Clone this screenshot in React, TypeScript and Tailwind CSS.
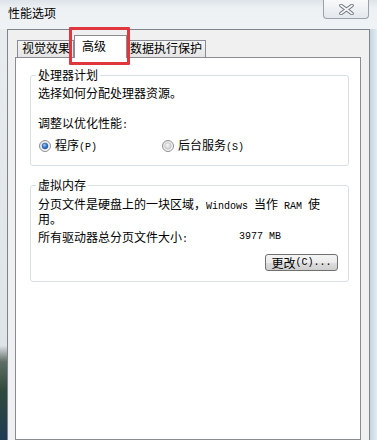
import React from "react";

const cjk = "font-['Noto_Sans_CJK_SC',sans-serif]";
const mono = "font-['Liberation_Mono',monospace] text-[10px]";

function Radio({ checked, id }: { checked: boolean; id: string }) {
  return (
    <svg width="12" height="12" viewBox="0 0 12 12" className="shrink-0">
      <defs>
        <linearGradient id={`o${id}`} x1="0" y1="0" x2="1" y2="1">
          <stop offset="0" stopColor="#e2e2e2" />
          <stop offset="1" stopColor="#fbfbfb" />
        </linearGradient>
        <radialGradient id={`b${id}`} cx="0.4" cy="0.35" r="0.7">
          <stop offset="0" stopColor="#a8d0f5" />
          <stop offset="0.5" stopColor="#3b7bd0" />
          <stop offset="1" stopColor="#1c4d95" />
        </radialGradient>
        <radialGradient id={`g${id}`} cx="0.4" cy="0.35" r="0.7">
          <stop offset="0" stopColor="#f6f6f6" />
          <stop offset="1" stopColor="#c9c9c9" />
        </radialGradient>
      </defs>
      <circle cx="6" cy="6" r="5.5" fill={`url(#o${id})`} stroke="#8d8f92" strokeWidth="1" />
      {checked ? (
        <circle cx="6" cy="6" r="3" fill={`url(#b${id})`} stroke="#2a5a9c" strokeWidth="0.5" />
      ) : (
        <circle cx="6" cy="6" r="3.3" fill={`url(#g${id})`} stroke="#b9b9b9" strokeWidth="0.5" />
      )}
    </svg>
  );
}

export default function App() {
  return (
    <div
      className={`relative w-[377px] h-[440px] overflow-hidden flex flex-col bg-[#e9eef2] text-black text-[12px] ${cjk}`}
    >
      {/* title bar */}
      <div className="h-[29px] flex items-start justify-between bg-[linear-gradient(180deg,#dde3e9_0px,#edf1f4_8px,#f0f3f6_29px)]">
        <div className="pl-[8px] pt-[6px] leading-[14px]">性能选项</div>
        <div className="mr-[8px] w-[46px] h-[19px] rounded-b-[4px] border border-t-0 border-[#9aa1ab] bg-[linear-gradient(180deg,#f8f9fa,#e3e8ed)] flex items-center justify-center">
          <svg width="15" height="11" viewBox="0 0 15 11">
            <path d="M2 1.5 L13 9.5 M13 1.5 L2 9.5" stroke="#6f747c" strokeWidth="3.6" strokeLinecap="round" />
            <path d="M2 1.5 L13 9.5 M13 1.5 L2 9.5" stroke="#f4f5f6" strokeWidth="1.8" strokeLinecap="round" />
          </svg>
        </div>
      </div>

      {/* body */}
      <div className="flex-1 flex">
        <div className="w-[7px] bg-[linear-gradient(180deg,#e8ecef_0%,#dfe4e8_77%,#5f6e64_81%,#2f4a3c_88%,#1f3b55_100%)]" />
        <div className="w-[363px] border-l border-t border-r border-[#7d848c] bg-[#f0f0f0] flex flex-col">
          {/* tabs */}
          <div className="h-[27px] flex items-end pl-[9px]">
            <div className="w-[57px] h-[17px] border border-b-0 border-[#898c95] bg-[linear-gradient(180deg,#f5f5f5,#e5e5e5)] pl-[4px] leading-[13px]">
              视觉效果
            </div>
            <div className="relative z-10 -mb-[1px] w-[53px] h-[23px] border border-b-0 border-[#898c95] bg-white pl-[7px] pt-[3px] leading-[13px]">
              高级
            </div>
            <div className="w-[79px] h-[17px] border border-l-0 border-b-0 border-[#898c95] bg-[linear-gradient(180deg,#f5f5f5,#e5e5e5)] pl-[3px] leading-[13px]">
              数据执行保护
            </div>
          </div>

          {/* panel */}
          <div className="ml-[7px] w-[346px] flex-1 border border-[#898c95] bg-white flex flex-col">
            <fieldset className="mt-[10px] ml-[14px] mr-[11px] border border-[#d5dfe5] rounded-[3px] pl-[7px] pr-[8px] pb-[12px]">
              <legend className="-ml-[2px] px-[2px] leading-[14px]">处理器计划</legend>
              <div className="mt-[4px] leading-[14px]">选择如何分配处理器资源。</div>
              <div className="mt-[16px] leading-[14px]">
                调整以优化性能<span className={mono}>:</span>
              </div>
              <div className="mt-[6px] h-[14px] flex items-center leading-[14px]">
                <div className="ml-[1px] w-[123px] flex items-center gap-[4px]">
                  <Radio checked id="a" />
                  <span>
                    程序<span className={mono}>(P)</span>
                  </span>
                </div>
                <div className="flex items-center gap-[4px]">
                  <Radio checked={false} id="b" />
                  <span>
                    后台服务<span className={mono}>(S)</span>
                  </span>
                </div>
              </div>
            </fieldset>

            <fieldset className="mt-[12px] ml-[14px] mr-[11px] border border-[#d5dfe5] rounded-[3px] pl-[7px] pr-[10px] pb-[10px] flex flex-col">
              <legend className="-ml-[2px] px-[2px] leading-[14px]">虚拟内存</legend>
              <div className="mt-[6px] leading-[12px]">
                分页文件是硬盘上的一块区域，<span className={mono}>Windows </span>当作<span className={mono}> RAM </span>使
                <br />
                用。
              </div>
              <div className="mt-[5px] leading-[14px] flex">
                <span className="w-[201px]">
                  所有驱动器总分页文件大小<span className={mono}>:</span>
                </span>
                <span className={mono}>3977 MB</span>
              </div>
              <div className="mt-[7px] flex justify-end">
                <div className="w-[73px] h-[17px] rounded-[3px] border border-[#707070] bg-[linear-gradient(180deg,#f4f4f4_0%,#ebebeb_50%,#dddddd_51%,#cfcfcf_100%)] flex items-center justify-center leading-[14px]">
                  更改<span className={mono}>(C)...</span>
                </div>
              </div>
            </fieldset>
          </div>
        </div>
        <div className="w-[7px] bg-[linear-gradient(90deg,#c9d6df,#e2ebf0)]" />
      </div>

      {/* highlight annotation */}
      <div className="absolute left-[69px] top-[27px] w-[61px] h-[38px] border-[3px] border-[#e0363d] rounded-[1px]" />
    </div>
  );
}
